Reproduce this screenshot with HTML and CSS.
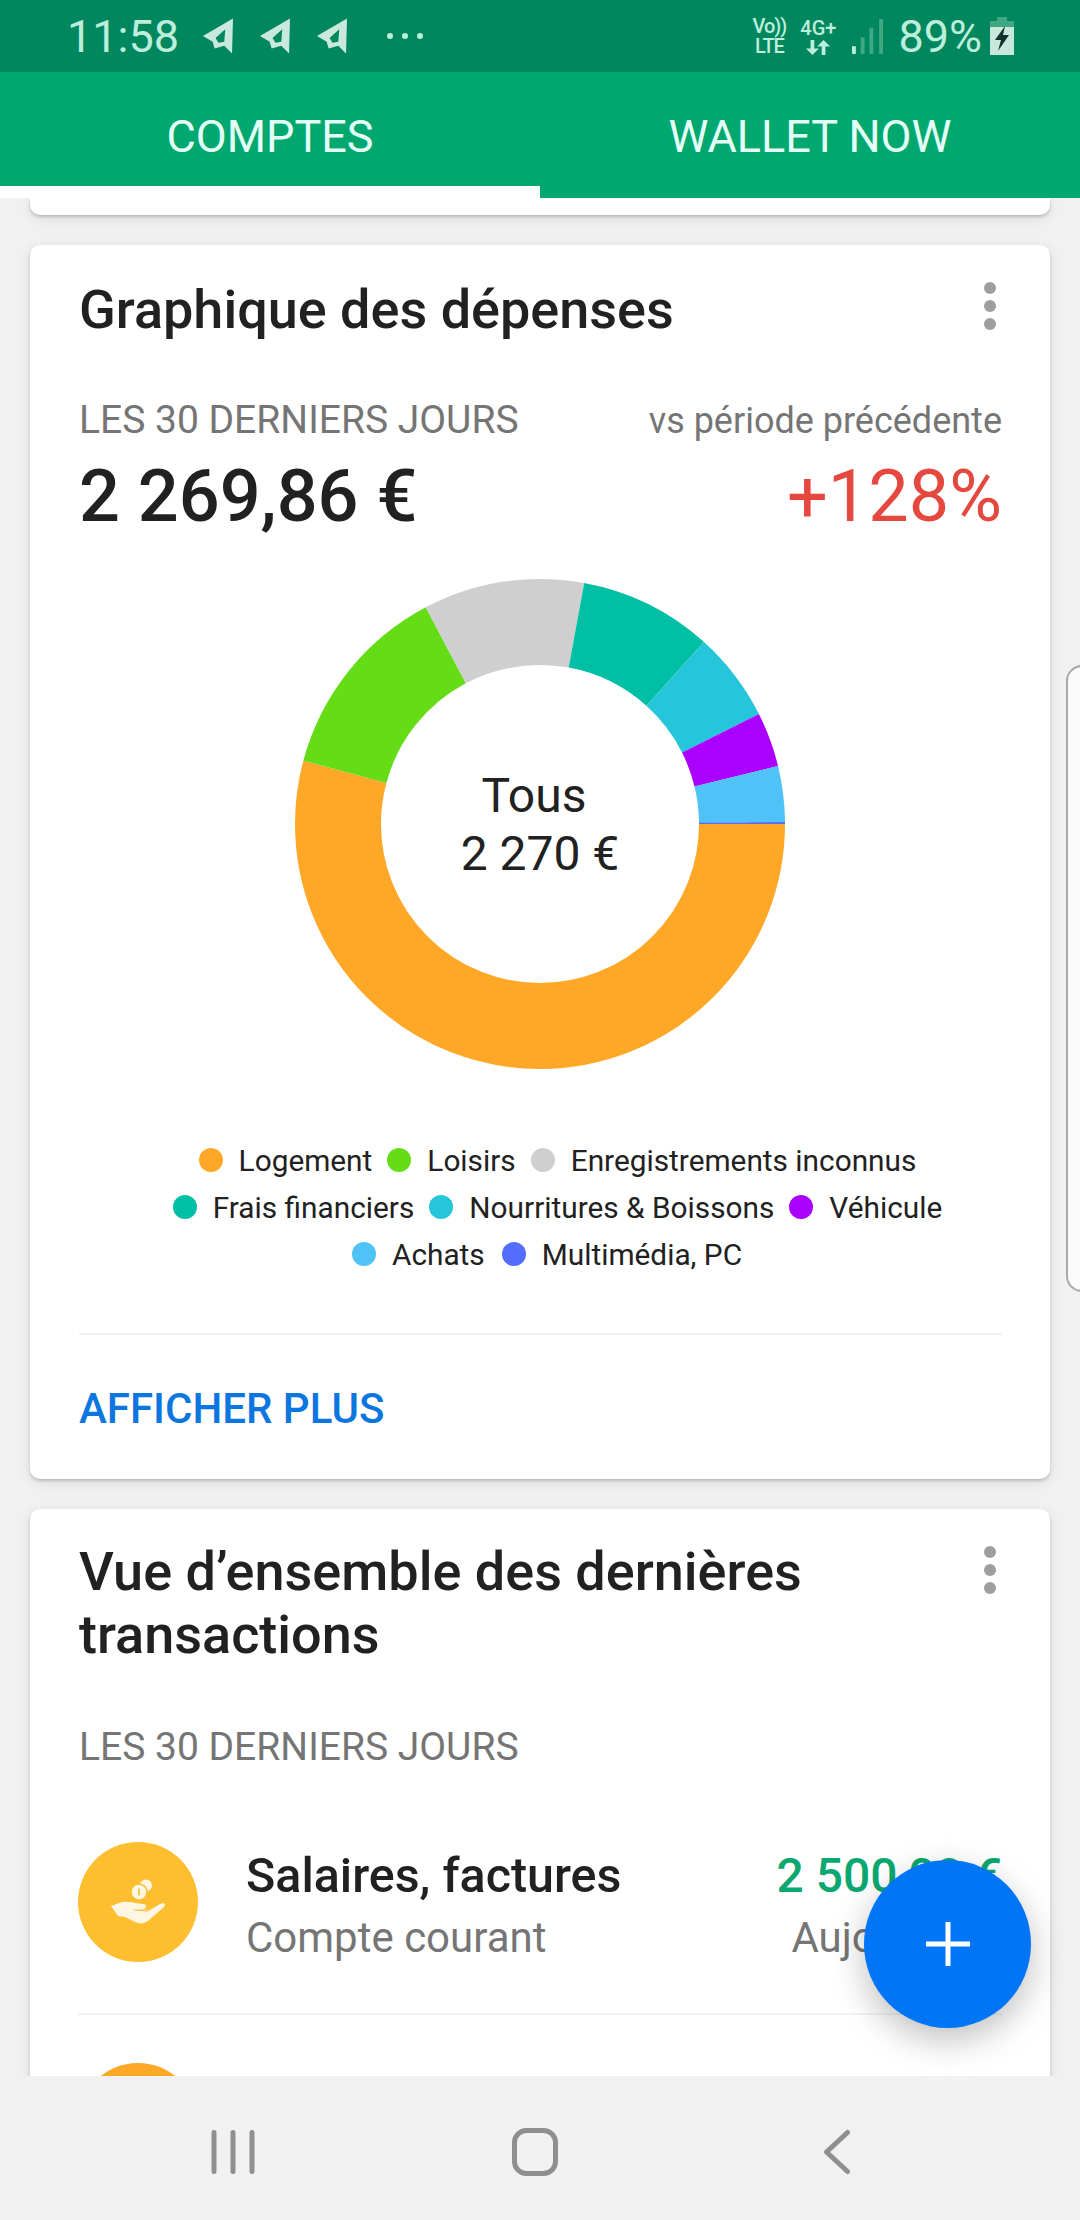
FILE: index.html
```html
<!DOCTYPE html>
<html>

	<head>
		<meta charset="UTF-8">
		<title>Comptes</title>
		<link rel="stylesheet" href="styles.css">
	</head>

	<body>
		<div id="phone">
			<!--status bar-->
			<div class="status">
				<span class="clock">11:58</span>
				<svg class="plane" viewBox="0 0 32 38"><path d="M1 19 32 1 31 37 23 29 13 32 11 25ZM24 12 14 21 17 26 23 25Z" fill-rule="evenodd"/></svg>
				<svg class="plane" viewBox="0 0 32 38"><path d="M1 19 32 1 31 37 23 29 13 32 11 25ZM24 12 14 21 17 26 23 25Z" fill-rule="evenodd"/></svg>
				<svg class="plane" viewBox="0 0 32 38"><path d="M1 19 32 1 31 37 23 29 13 32 11 25ZM24 12 14 21 17 26 23 25Z" fill-rule="evenodd"/></svg>
				<span class="more"><i></i><i></i><i></i></span>
				<span class="grow"></span>
				<span class="net net-vo"><b>Vo))</b><b>LTE</b></span>
				<span class="net net-last">
					<b>4G+</b>
					<svg class="arrows" viewBox="0 0 28 16"><path d="M6 0H10V9H15L8 16 1 9H6ZM20 0 27 7H22V16H18V7H13Z"/></svg>
				</span>
				<svg class="signal" viewBox="0 0 32 36">
					<rect x="0" y="28" width="4" height="8" fill="#b9ecd6"/>
					<rect x="9" y="19" width="4" height="17" fill="#3fa983"/>
					<rect x="18" y="9" width="4" height="27" fill="#3fa983"/>
					<rect x="28" y="0" width="4" height="36" fill="#3fa983"/>
				</svg>
				<span class="pct">89%</span>
				<svg class="batt" viewBox="0 0 24 38">
					<path d="M7 0H17V4H24V38H0V4H7Z" fill="#c8e8dc"/>
					<path d="M7 0H17V4H24V10H0V4H7Z" fill="#3fa983"/>
					<path d="M15 9 5 23H11L8 34 19 18H13Z" fill="#10302a"/>
				</svg>
			</div>

			<!--tabs-->
			<div class="tabs">
				<div class="tab tab-on">COMPTES</div>
				<div class="tab">WALLET NOW</div>
			</div>

			<div class="scroller">
				<div class="card card-prev"></div>

				<!--graphique-->
				<div class="card">
					<div class="card-head">
						<h2>Graphique des dépenses</h2>
						<span class="dots"><i></i><i></i><i></i></span>
					</div>
					<div class="period-row">
						<span class="period">LES 30 DERNIERS JOURS</span>
						<span class="vs">vs période précédente</span>
					</div>
					<div class="sum-row">
						<span class="sum">2 269,86 €</span>
						<span class="delta">+128%</span>
					</div>

					<div class="chart">
						<svg class="donut" viewBox="0 0 490 490">
							<circle class="seg" pathLength="360" stroke="#ffa726" stroke-dasharray="195 165" stroke-dashoffset="0"/>
							<circle class="seg" pathLength="360" stroke="#64dd17" stroke-dasharray="47.2 312.8" stroke-dashoffset="-195"/>
							<circle class="seg" pathLength="360" stroke="#cfcfcf" stroke-dasharray="38.2 321.8" stroke-dashoffset="-242.2"/>
							<circle class="seg" pathLength="360" stroke="#00bfa5" stroke-dasharray="31.6 328.4" stroke-dashoffset="-280.4"/>
							<circle class="seg" pathLength="360" stroke="#26c6da" stroke-dasharray="21.3 338.7" stroke-dashoffset="-312"/>
							<circle class="seg" pathLength="360" stroke="#aa00ff" stroke-dasharray="13 347" stroke-dashoffset="-333.3"/>
							<circle class="seg" pathLength="360" stroke="#4fc3f7" stroke-dasharray="13.2 346.8" stroke-dashoffset="-346.3"/>
							<circle class="seg" pathLength="360" stroke="#536dfe" stroke-dasharray="0.5 359.5" stroke-dashoffset="-359.5"/>
						</svg>
						<div class="donut-text">
							<span class="donut-a">Tous</span>
							<span>2 270 €</span>
						</div>
					</div>

					<div class="legend">
						<div class="leg-row">
							<span class="leg"><i class="c-log"></i>Logement</span>
							<span class="leg"><i class="c-loi"></i>Loisirs</span>
							<span class="leg"><i class="c-inc"></i>Enregistrements inconnus</span>
						</div>
						<div class="leg-row">
							<span class="leg"><i class="c-fra"></i>Frais financiers</span>
							<span class="leg"><i class="c-nou"></i>Nourritures &amp; Boissons</span>
							<span class="leg"><i class="c-veh"></i>Véhicule</span>
						</div>
						<div class="leg-row leg-row3">
							<span class="leg"><i class="c-ach"></i>Achats</span>
							<span class="leg"><i class="c-mul"></i>Multimédia, PC</span>
						</div>
					</div>

					<div class="card-foot">AFFICHER PLUS</div>
				</div>

				<!--transactions-->
				<div class="card">
					<div class="card-head card-head2">
						<h2>Vue d’ensemble des dernières transactions</h2>
						<span class="dots"><i></i><i></i><i></i></span>
					</div>
					<div class="period-row period-row2">
						<span class="period">LES 30 DERNIERS JOURS</span>
					</div>
					<div class="trans">
						<span class="round round-y">
							<svg class="hand" viewBox="0 0 56 46">
								<circle cx="36" cy="6.5" r="6"/>
								<circle cx="29" cy="13" r="8" stroke="#fdbe2f" stroke-width="1.5"/>
								<rect x="28.2" y="9.5" width="1.6" height="7" fill="#fdbe2f"/>
								<path d="M1 27 12 23C20 22 26 25 33 25 37 25 37 30 33 30L27 30 38 31 50 25C55 23 56 26 54 28L38 42C34 45 29 45 25 43L15 38 8 37Z"/>
								<path d="M24 31 38 32 47 26" fill="none" stroke="#fdbe2f" stroke-width="1"/>
							</svg>
						</span>
						<div class="trans-main">
							<div class="trans-name">Salaires, factures</div>
							<div class="trans-sub">Compte courant</div>
						</div>
						<div class="trans-side">
							<div class="trans-amt">2 500,00 €</div>
							<div class="trans-sub">Aujourd’hui</div>
						</div>
					</div>
					<div class="trans trans-next">
						<span class="round round-o"></span>
					</div>
				</div>
			</div>

			<!--android nav-->
			<div class="navbar">
				<svg class="nav-ico" viewBox="0 0 48 48"><path d="M5 4.5V43.5M24 4.5V43.5M43 4.5V43.5" fill="none" stroke="#8f8f8f" stroke-width="5" stroke-linecap="round"/></svg>
				<svg class="nav-ico" viewBox="0 0 48 48"><rect x="3.5" y="2.5" width="41" height="43" rx="12" fill="none" stroke="#8f8f8f" stroke-width="5"/></svg>
				<svg class="nav-ico" viewBox="0 0 48 48"><path d="M34.5 4.5 13.5 24 34.5 43.5" fill="none" stroke="#8f8f8f" stroke-width="5" stroke-linecap="round" stroke-linejoin="round"/></svg>
			</div>

			<!--over the content-->
			<div class="handle"></div>
			<div class="fab">
				<svg viewBox="0 0 44 44"><path d="M22 0V44M0 22H44" stroke="#fff" stroke-width="5"/></svg>
			</div>
		</div>
	</body>

</html>
```

FILE: styles.css
```css
* {
	margin: 0;
	padding: 0;
	box-sizing: border-box;
}

body {
	font-family: Roboto, "Noto Sans", sans-serif;
	background: #f1f1f1;
}

#phone {
	width: 1080px;
	height: 2220px;
	position: relative;
	overflow: hidden;
	display: flex;
	flex-direction: column;
	background: #f1f1f1;
}

/* status bar */

.status {
	height: 72px;
	flex: none;
	background: #00875e;
	color: #bdeedb;
	display: flex;
	align-items: center;
	padding: 0 66px 0 67px;
}

.clock {
	font-size: 45px;
	margin-right: 23px;
}

.plane {
	width: 31px;
	height: 38px;
	fill: #c9e9dd;
	margin-right: 26px;
}

.more {
	display: flex;
	gap: 9px;
	margin-left: 14px;
}

.more i {
	width: 6px;
	height: 6px;
	border-radius: 50%;
	background: #bdeedb;
}

.grow {
	flex: 1;
}

.net {
	display: flex;
	flex-direction: column;
	align-items: center;
	font-size: 20px;
	line-height: 20px;
	margin-right: 14px;
}

.net-vo {
	letter-spacing: -1px;
}

.net-last {
	margin-right: 0;
}

.net b {
	font-weight: 500;
}

.arrows {
	width: 26px;
	height: 15px;
	fill: #bdeedb;
	margin-top: 2px;
}

.signal {
	width: 31px;
	height: 35px;
	margin: 0 15px 0 16px;
}

.pct {
	font-size: 45px;
	margin-right: 8px;
}

.batt {
	width: 24px;
	height: 38px;
}

/* tabs */

.tabs {
	height: 126px;
	flex: none;
	background: #00a86f;
	display: flex;
	position: relative;
	z-index: 2;
}

.tab {
	width: 50%;
	display: flex;
	justify-content: center;
	align-items: center;
	padding-top: 2px;
	font-size: 45px;
	color: #e4fff6;
}

.tab-on {
	border-bottom: 12px solid #fff;
	padding-top: 14px;
}

/* content */

.scroller {
	flex: 1;
	overflow: hidden;
	padding: 0 30px;
	display: flex;
	flex-direction: column;
	gap: 30px;
}

.card {
	flex: none;
	background: #fff;
	border-radius: 10px;
	box-shadow: 0 2px 3px rgba(0, 0, 0, 0.18), 0 3px 14px rgba(0, 0, 0, 0.09);
}

.card-prev {
	height: 17px;
	border-radius: 0 0 10px 10px;
}

.card-head {
	display: flex;
	justify-content: space-between;
	padding: 33px 54px 0 49px;
}

.card-head2 {
	padding-top: 31px;
}

.card-head h2 {
	width: 780px;
	font-size: 54px;
	line-height: 63px;
	font-weight: 500;
	color: #212121;
}

.dots {
	display: flex;
	flex-direction: column;
	gap: 6px;
	padding-top: 4px;
}

.card-head2 .dots {
	padding-top: 6px;
}

.dots i {
	width: 12px;
	height: 12px;
	border-radius: 50%;
	background: #9e9e9e;
}

.period-row {
	display: flex;
	justify-content: space-between;
	align-items: baseline;
	padding: 56px 48px 0 49px;
	line-height: 46px;
}

.period-row2 {
	padding-top: 58px;
}

.period {
	font-size: 39px;
	color: #757575;
}

.vs {
	font-size: 36px;
	color: #757575;
}

.sum-row {
	display: flex;
	justify-content: space-between;
	align-items: baseline;
	padding: 0 48px 0 49px;
	margin-top: 11px;
	line-height: 84px;
}

.sum {
	font-size: 72px;
	font-weight: 500;
	color: #212121;
}

.delta {
	font-size: 72px;
	color: #e5483f;
}

.chart {
	width: 490px;
	height: 490px;
	margin: 40px auto 0;
	position: relative;
}

.donut {
	width: 490px;
	height: 490px;
	display: block;
}

.seg {
	cx: 245px;
	cy: 245px;
	r: 202px;
	fill: none;
	stroke-width: 86px;
}

.donut-text {
	position: absolute;
	left: 0;
	right: 0;
	top: 188px;
	display: flex;
	flex-direction: column;
	align-items: center;
	color: #212121;
	font-size: 48px;
	line-height: 58px;
}

.donut-a {
	margin-left: -12px;
}

.legend {
	margin-top: 71px;
	display: flex;
	flex-direction: column;
	gap: 7px;
}

.leg-row {
	display: flex;
	justify-content: center;
	gap: 15px;
	height: 40px;
	align-items: center;
	padding-left: 35px;
}

.leg-row3 {
	padding-left: 14px;
	gap: 17px;
}

.leg {
	display: flex;
	align-items: center;
	font-size: 29.8px;
	color: #212121;
}

.leg i {
	width: 24px;
	height: 24px;
	border-radius: 50%;
	margin-right: 16px;
}

.c-log { background: #ffa726; }
.c-loi { background: #64dd17; }
.c-inc { background: #cfcfcf; }
.c-fra { background: #00bfa5; }
.c-nou { background: #26c6da; }
.c-veh { background: #aa00ff; }
.c-ach { background: #4fc3f7; }
.c-mul { background: #536dfe; }

.card-foot {
	margin: 59px 48px 0 49px;
	height: 146px;
	border-top: 2px solid #f1f1f1;
	padding-top: 49px;
	font-size: 42px;
	line-height: 50px;
	font-weight: 500;
	color: #0b76e0;
}

/* transaction rows */

.trans {
	display: flex;
	margin: 72px 48px 0 48px;
	height: 173px;
	border-bottom: 2px solid #f3f3f3;
}

.trans-next {
	border: 0;
	margin-top: 48px;
}

.round {
	width: 120px;
	height: 120px;
	border-radius: 50%;
	display: flex;
	justify-content: center;
	align-items: center;
	flex: none;
}

.round-y {
	background: #fdbe2f;
}

.round-o {
	background: #ffa726;
}

.hand {
	width: 56px;
	height: 46px;
	fill: #fdf6e3;
}

.trans-main {
	flex: 1;
	margin-left: 48px;
	padding-top: 4px;
}

.trans-name {
	font-size: 48.4px;
	line-height: 60px;
	font-weight: 500;
	color: #212121;
}

.trans-sub {
	font-size: 42px;
	line-height: 50px;
	margin-top: 7px;
	color: #757575;
}

.trans-side {
	text-align: right;
	padding-top: 4px;
}

.trans-amt {
	font-size: 48px;
	line-height: 60px;
	font-weight: 500;
	color: #0ba771;
}

/* nav bar */

.navbar {
	height: 144px;
	flex: none;
	background: #f1f1f1;
	display: flex;
	justify-content: space-between;
	align-items: center;
	padding: 8px 219px 0 209px;
	position: relative;
}

.nav-ico {
	width: 48px;
	height: 48px;
}

/* overlays */

.handle {
	position: absolute;
	left: 1066px;
	top: 665px;
	width: 40px;
	height: 627px;
	border: 2px solid #aaa;
	border-radius: 16px;
	background: #fafafa;
}

.fab {
	position: absolute;
	left: 864px;
	top: 1860px;
	width: 167px;
	height: 168px;
	border-radius: 50%;
	background: #0075f5;
	box-shadow: 0 12px 34px rgba(0, 0, 0, 0.25);
	display: flex;
	justify-content: center;
	align-items: center;
}

.fab svg {
	width: 44px;
	height: 44px;
}
```
